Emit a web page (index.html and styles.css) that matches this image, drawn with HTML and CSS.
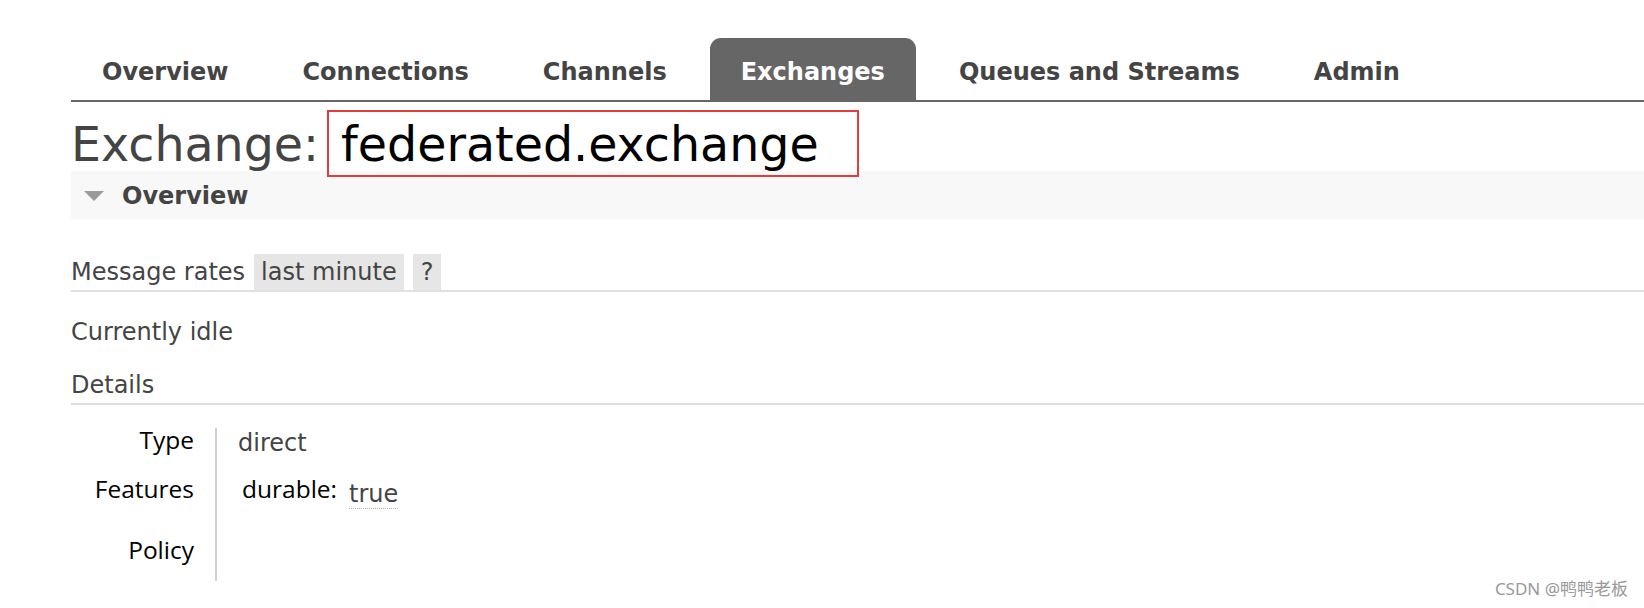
FILE: index.html
```html
<!DOCTYPE html>
<html lang="en">
<head>
    <meta charset="UTF-8">
    <title>RabbitMQ Management - Exchange: federated.exchange</title>
    <link rel="stylesheet" href="styles.css">
</head>
<body>
    <ul id="tabs">
        <li><a href="#">Overview</a></li>
        <li><a href="#">Connections</a></li>
        <li><a href="#">Channels</a></li>
        <li><a href="#" class="selected">Exchanges</a></li>
        <li><a href="#">Queues and Streams</a></li>
        <li><a href="#">Admin</a></li>
    </ul>

    <div id="main">
        <h1>Exchange:<span class="highlight">federated.exchange</span></h1>

        <div class="section">
            <h2>Overview</h2>

            <div class="rates">
                <span>Message rates</span>
                <span class="pill">last minute</span>
                <span class="pill">?</span>
            </div>

            <p class="idle">Currently idle</p>

            <h3>Details</h3>

            <table class="facts">
                <tr class="row-type">
                    <th>Type</th>
                    <td>direct</td>
                </tr>
                <tr class="row-features">
                    <th>Features</th>
                    <td><span class="key">durable:</span><span class="val">true</span></td>
                </tr>
                <tr class="row-policy">
                    <th>Policy</th>
                    <td></td>
                </tr>
            </table>
        </div>
    </div>

    <div id="watermark">CSDN @鸭鸭老板</div>
</body>
</html>
```

FILE: styles.css
```css
body {
    margin: 0;
    height: 608px;
    font-family: "DejaVu Sans", Verdana, sans-serif;
    font-size: 24px;
    color: #444;
    background-color: white;
    overflow: hidden;
}

#tabs {
    display: flex;
    gap: 12px;
    list-style: none;
    margin: 0 0 0 71px;
    padding: 38px 0 0 0;
    border-bottom: 2px solid #666;
}

#tabs a {
    display: block;
    padding: 20px 31px 14px;
    line-height: 28px;
    font-weight: bold;
    color: #444;
    text-decoration: none;
    border-radius: 11px 11px 0 0;
}

#tabs a.selected {
    background-color: #666;
    color: white;
}

#main {
    padding-left: 71px;
}

h1 {
    margin: 8px 0 -6px 0;
    font-size: 47.5px;
    font-weight: normal;
    line-height: 56px;
    color: #444;
}

h1 .highlight {
    display: inline-block;
    margin-left: 8px;
    padding: 5px 38px 2px 12px;
    border: 2px solid #e23c3f;
    color: black;
}

.section h2 {
    display: flex;
    align-items: center;
    margin: 0;
    padding: 3px 0 0 13px;
    height: 45px;
    font-size: 24px;
    line-height: 45px;
    background-color: #f8f8f8;
    color: #444;
}

.section h2::before {
    content: "";
    width: 0;
    height: 0;
    margin: -2px 18px 0 0;
    border-left: 10px solid transparent;
    border-right: 10px solid transparent;
    border-top: 10px solid #9a9a9a;
}

.rates {
    display: flex;
    gap: 9px;
    margin-top: 34px;
    padding-top: 1px;
    line-height: 36px;
    border-bottom: 2px solid #e0e0e0;
}

.rates .pill {
    padding: 0 7px;
    background-color: #e6e6e6;
}

.rates .pill + .pill {
    padding: 0 8px;
}

.idle {
    margin: 26px 0 0 0;
    line-height: 28px;
}

h3 {
    margin: 25px 0 0 0;
    padding-bottom: 4px;
    font-size: 24px;
    font-weight: normal;
    line-height: 28px;
    border-bottom: 2px solid #e0e0e0;
}

.facts {
    margin-top: 23px;
    border-collapse: collapse;
}

.facts th {
    width: 123px;
    padding: 0 21px 0 0;
    vertical-align: top;
    text-align: right;
    font-family: "Open Sans", "Liberation Sans", sans-serif;
    font-size: 24.5px;
    font-weight: normal;
    line-height: 24px;
    color: black;
}

.facts td {
    vertical-align: top;
    padding: 3px 0 22px 21px;
    line-height: 24px;
    border-left: 2px solid #cfcfcf;
}

.facts .row-features td {
    height: 61px;
    box-sizing: border-box;
    padding: 0 0 0 25px;
}

.facts .row-policy td {
    height: 43px;
    box-sizing: border-box;
    padding: 0;
}

.key {
    font-family: "Open Sans", "Liberation Sans", sans-serif;
    font-size: 24.5px;
    color: black;
}

.val {
    display: inline-block;
    margin-left: 12px;
    padding-bottom: 2px;
    vertical-align: -4px;
    border-bottom: 1px dotted #b0b0b0;
}

#watermark {
    position: absolute;
    right: 16px;
    bottom: 9px;
    font-family: "Noto Sans", "Noto Sans CJK SC", sans-serif;
    font-size: 17px;
    line-height: 20px;
    color: #999;
    text-shadow: 0 0 1px white;
}
```
